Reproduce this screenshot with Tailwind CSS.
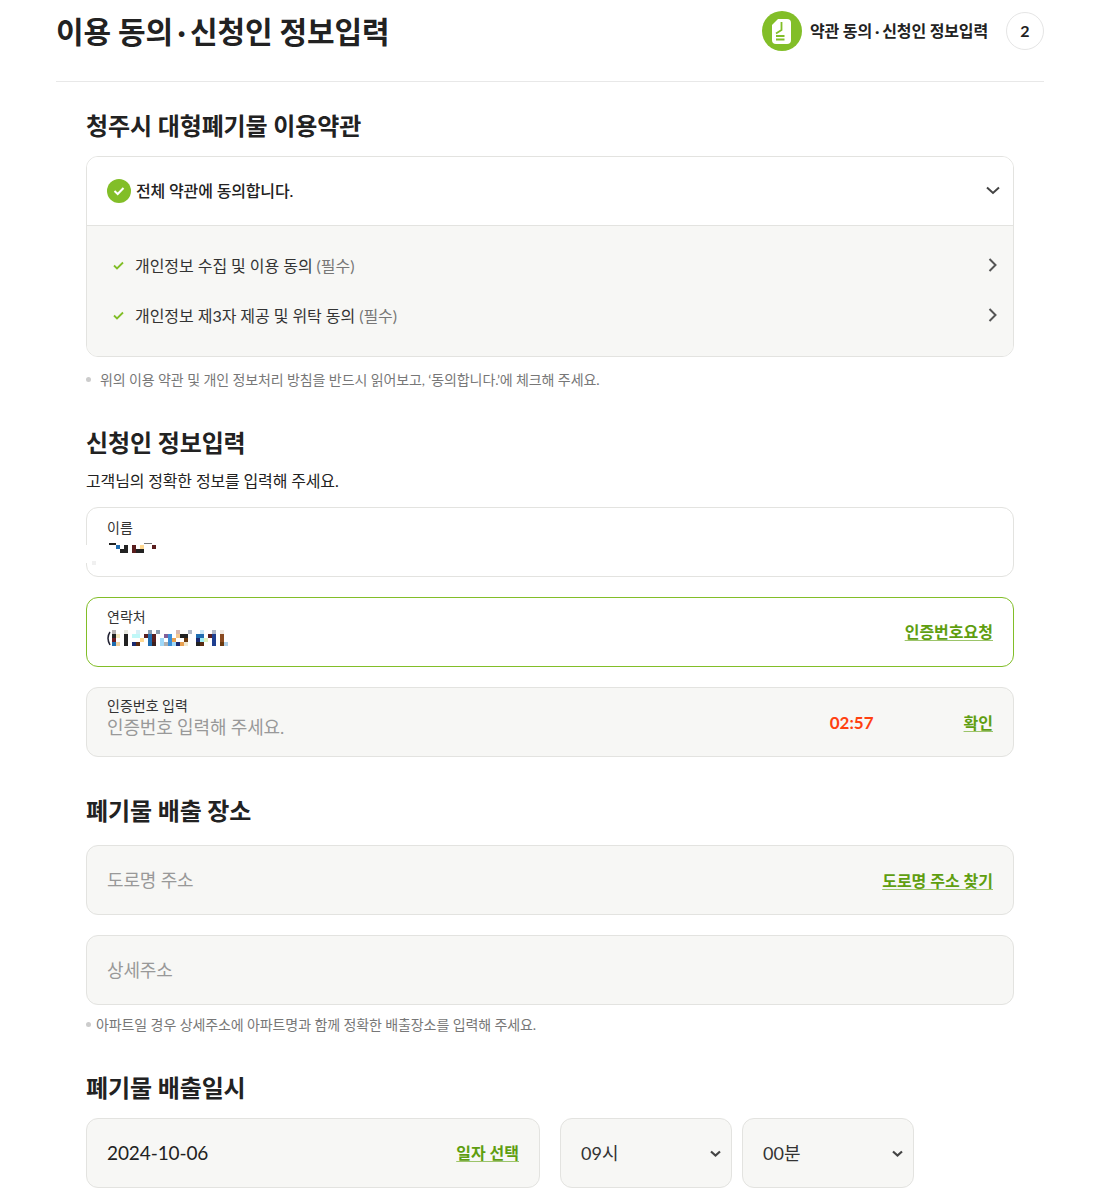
<!DOCTYPE html>
<html lang="ko">
<head>
  <meta charset="UTF-8" />
  <meta name="viewport" content="width=device-width, initial-scale=1.0"/>
  <title>이용 동의 · 신청인 정보입력</title>
  <script src="https://cdn.jsdelivr.net/npm/@tailwindcss/browser@4"></script>
</head>
<body class="bg-white text-[#222222] font-['Lato','Noto_Sans_CJK_KR',sans-serif] h-[1193px] overflow-hidden">
  <div class="w-[988px] ml-[56px]">

    <!-- 상단 타이틀 -->
    <header class="h-[82px] border-b border-[#e8e8e8] flex justify-between items-start pt-[11px]">
      <h1 class="text-[30px] leading-[40px] font-bold tracking-[-0.15px]">이용 동의<span class="mx-[4.500px]">·</span>신청인 정보입력</h1>
      <div class="flex items-center">
        <div class="w-10 h-10 rounded-full bg-[#82be28] flex items-center justify-center">
          <svg width="19" height="25" viewBox="0 0 19 25">
            <path d="M6 0H15A4 4 0 0 1 19 4V21A4 4 0 0 1 15 25H4A4 4 0 0 1 0 21V6Z" fill="#fff"/>
            <path d="M9.500 3V11L4 14.500M4 17H12.500M4 20.500H12.500" stroke="#82be28" stroke-width="1.800" fill="none"/>
          </svg>
        </div>
        <span class="ml-2 text-[16px] font-bold tracking-[-0.15px]">약관 동의<span class="mx-[3px]">·</span>신청인 정보입력</span>
        <div class="ml-[18px] w-[38px] h-[38px] rounded-full border border-[#e5e5e5] flex items-center justify-center text-[16px] font-bold">2</div>
      </div>
    </header>

    <main class="px-[30px]">

      <!-- 이용약관 -->
      <section>
        <h2 class="mt-[27px] text-[24px] leading-[34px] font-bold tracking-[-0.1px]">청주시 대형폐기물 이용약관</h2>
        <div class="mt-[13px] rounded-xl border border-[#e3e3e0] overflow-hidden">
          <div class="h-[69px] bg-white border-b border-[#e3e3e0] flex items-center justify-between pl-5 pr-[13px]">
            <div class="flex items-center">
              <span class="w-6 h-6 rounded-full bg-[#82be28] flex items-center justify-center">
                <svg width="12" height="10" viewBox="0 0 12 10"><path d="M1.500 5L4.700 8L10.500 2" stroke="#fff" stroke-width="2" fill="none"/></svg>
              </span>
              <span class="ml-[5px] text-[16px] font-medium tracking-[-0.15px]">전체 약관에 동의합니다.</span>
            </div>
            <svg class="mb-[2px]" width="14" height="9" viewBox="0 0 14 9"><path d="M1 1.500L7 7L13 1.500" stroke="#444" stroke-width="2" fill="none"/></svg>
          </div>
          <ul class="bg-[#f7f7f5] h-[130px] pt-[14px]">
            <li class="h-[50px] flex items-center justify-between pl-[26px] pr-4">
              <div class="flex items-center">
                <svg width="11" height="9" viewBox="0 0 11 9"><path d="M1 4.500L4 7.500L10 1.500" stroke="#82be28" stroke-width="1.800" fill="none"/></svg>
                <span class="ml-[11px] mt-px text-[16px] text-[#333] tracking-[-0.05px]">개인정보 수집 및 이용 동의 <span class="text-[#777]">(필수)</span></span>
              </div>
              <svg width="9" height="14" viewBox="0 0 9 14"><path d="M1.500 1L7.500 7L1.500 13" stroke="#555" stroke-width="2" fill="none"/></svg>
            </li>
            <li class="h-[50px] flex items-center justify-between pl-[26px] pr-4">
              <div class="flex items-center">
                <svg width="11" height="9" viewBox="0 0 11 9"><path d="M1 4.500L4 7.500L10 1.500" stroke="#82be28" stroke-width="1.800" fill="none"/></svg>
                <span class="ml-[11px] mt-px text-[16px] text-[#333] tracking-[-0.05px]">개인정보 제3자 제공 및 위탁 동의 <span class="text-[#777]">(필수)</span></span>
              </div>
              <svg width="9" height="14" viewBox="0 0 9 14"><path d="M1.500 1L7.500 7L1.500 13" stroke="#555" stroke-width="2" fill="none"/></svg>
            </li>
          </ul>
        </div>
        <p class="mt-[12px] h-5 flex items-center text-[14px] text-[#777] tracking-[-0.1px]">
          <span class="w-[5px] h-[5px] rounded-full bg-[#ccc] mr-[9px]"></span>위의 이용 약관 및 개인 정보처리 방침을 반드시 읽어보고, ‘동의합니다.’에 체크해 주세요.
        </p>
      </section>

      <!-- 신청인 정보 -->
      <section>
        <h2 class="mt-[37px] text-[24px] leading-[34px] font-bold tracking-[-0.1px]">신청인 정보입력</h2>
        <p class="mt-[11px] text-[16px] leading-[20px] tracking-[-0.15px]">고객님의 정확한 정보를 입력해 주세요.</p>
        <div class="mt-4 flex flex-col gap-5">
          <div class="relative h-[70px] rounded-xl border border-[#e3e3e0] bg-white pl-5 pt-[11px]">
            <div class="text-[14px] leading-[17px] text-[#333]">이름</div>
            <div class="absolute -left-px top-[37px] w-[10px] h-[18px] bg-white"></div>
            <div class="absolute left-[5px] top-[53px] w-1 h-1 bg-[#f0f0f0]"></div>
            <svg class="absolute left-[20px] top-[33px]" width="50" height="12" shape-rendering="crispEdges">
              <path fill="#222" d="M2 2h7v2H2zM13 8h8v4h-8zM17 4h4v4h-4zM29 8h8v4h-8z"/>
              <path fill="#1f6cb0" d="M9 4h4v4H9z"/>
              <path fill="#5a1e1e" d="M25 4h4v8h-4zM45 4h4v4h-4z"/>
              <path fill="#ffd890" d="M33 4h4v4h-4z"/>
              <path fill="#777" d="M37 2h8v1h-8z"/>
            </svg>
          </div>
          <div class="relative h-[70px] rounded-xl border border-[#82be28] bg-white px-5 flex justify-between items-center">
            <div class="self-start pt-[10px]">
              <div class="text-[14px] leading-[17px] text-[#333]">연락처</div>
              <svg class="mt-[5px]" width="122" height="16" shape-rendering="crispEdges">
                <path d="M3 2Q-1 8 3 15" stroke="#223" stroke-width="1.500" fill="none" shape-rendering="auto"/>
                <path fill="#b5b0b0" d="M5 0h4v4H5z"/><path fill="#e8e8e0" d="M17 0h4v4h-4z"/><path fill="#d8f0f8" d="M29 0h4v4h-4z"/><path fill="#8a9db0" d="M41 0h4v4h-4zM49 0h4v4h-4z"/><path fill="#d8b8b0" d="M69 0h4v4h-4z"/><path fill="#b0b8c8" d="M81 0h4v4h-4z"/><path fill="#c8e8f8" d="M93 0h4v4h-4z"/><path fill="#b0b8c8" d="M105 0h4v4h-4z"/><path fill="#f0e8e0" d="M113 0h4v4h-4z"/>
                <path fill="#222" d="M5 4h4v4H5zM17 4h4v12h-4zM73 4h8v4h-8zM89 12h4v4h-4z"/>
                <path fill="#f5e8c0" d="M9 4h4v4H9z"/><path fill="#c0f8f8" d="M25 4h8v4h-8z"/>
                <path fill="#5a2020" d="M37 4h4v4h-4zM45 4h4v8h-4zM101 4h4v4h-4z"/>
                <path fill="#1f6cb0" d="M41 4h4v12h-4zM89 4h8v4h-8zM5 12h4v4H5z"/>
                <path fill="#80609a" d="M57 4h4v4h-4z"/><path fill="#3a8fd8" d="M61 4h4v12h-4z"/><path fill="#f5c890" d="M69 4h4v4h-4z"/>
                <path fill="#1f3f90" d="M105 4h4v12h-4z"/><path fill="#8a4a20" d="M113 4h4v8h-4z"/>
                <path fill="#6a1a20" d="M5 8h4v4H5z"/><path fill="#ffd890" d="M33 8h4v4h-4z"/><path fill="#9fd8f8" d="M53 8h4v8h-4zM65 12h4v4h-4z"/>
                <path fill="#e8a050" d="M65 8h4v4h-4zM73 12h4v4h-4z"/><path fill="#6a3a10" d="M77 8h4v4h-4zM113 12h4v4h-4z"/>
                <path fill="#1a2a70" d="M89 8h4v4h-4zM69 12h4v4h-4zM25 12h4v4h-4z"/><path fill="#a0f0f8" d="M93 8h4v4h-4z"/><path fill="#dff0c0" d="M97 8h4v4h-4z"/>
                <path fill="#f0d0a0" d="M9 12h4v4H9z"/><path fill="#5a2a10" d="M29 12h4v4h-4zM93 12h4v4h-4z"/><path fill="#3a2020" d="M45 12h4v4h-4z"/>
                <path fill="#b0b0b0" d="M57 12h4v4h-4z"/><path fill="#f0e8d0" d="M77 12h4v4h-4z"/><path fill="#b0d0e8" d="M117 12h4v4h-4z"/>
              </svg>
            </div>
            <a class="text-[16px] leading-[20px] font-bold text-[#5f9e10] underline underline-offset-2 decoration-[#9cc46a]">인증번호요청</a>
          </div>
          <div class="h-[70px] rounded-xl border border-[#e3e3e0] bg-[#f7f7f5] pl-5 pr-5 pt-[9px] flex justify-between">
            <div>
              <div class="text-[14px] leading-[17px] text-[#333]">인증번호 입력</div>
              <div class="mt-px text-[18px] leading-[24px] text-[#999] tracking-[-0.15px]">인증번호 입력해 주세요.</div>
            </div>
            <div class="flex items-start pt-[16px]">
              <span class="text-[17px] leading-5 font-bold text-[#ff4010]">02:57</span>
              <a class="ml-[90px] text-[16px] leading-[20px] font-bold text-[#5f9e10] underline underline-offset-2 decoration-[#9cc46a]">확인</a>
            </div>
          </div>
        </div>
      </section>

      <!-- 배출 장소 -->
      <section>
        <h2 class="mt-[37px] text-[24px] leading-[34px] font-bold tracking-[-0.1px]">폐기물 배출 장소</h2>
        <div class="mt-[17px] flex flex-col gap-5">
          <div class="h-[70px] rounded-xl border border-[#e3e3e0] bg-[#f7f7f5] px-5 flex items-center justify-between">
            <span class="text-[18px] text-[#999] tracking-[-0.15px]">도로명 주소</span>
            <a class="mt-px text-[16px] leading-[20px] font-bold text-[#5f9e10] underline underline-offset-2 decoration-[#9cc46a]">도로명 주소 찾기</a>
          </div>
          <div class="h-[70px] rounded-xl border border-[#e3e3e0] bg-[#f7f7f5] px-5 flex items-center">
            <span class="text-[18px] text-[#999] tracking-[-0.15px]">상세주소</span>
          </div>
        </div>
        <p class="mt-[9px] h-5 flex items-center text-[14px] text-[#777] tracking-[-0.1px]">
          <span class="w-[5px] h-[5px] rounded-full bg-[#ccc] mr-[5px]"></span>아파트일 경우 상세주소에 아파트명과 함께 정확한 배출장소를 입력해 주세요.
        </p>
      </section>

      <!-- 배출 일시 -->
      <section>
        <h2 class="mt-[37px] text-[24px] leading-[34px] font-bold tracking-[-0.1px]">폐기물 배출일시</h2>
        <div class="mt-[13px] flex">
          <div class="w-[454px] h-[70px] rounded-xl border border-[#e3e3e0] bg-[#f7f7f5] px-5 flex items-center justify-between">
            <span class="text-[19px] text-[#222] tracking-[-0.1px]">2024-10-06</span>
            <a class="text-[16px] leading-[20px] font-bold text-[#5f9e10] underline underline-offset-2 decoration-[#9cc46a]">일자 선택</a>
          </div>
          <div class="ml-5 w-[172px] h-[70px] rounded-xl border border-[#e3e3e0] bg-[#f7f7f5] pl-5 pr-[10px] flex items-center justify-between">
            <span class="text-[18px] text-[#333]">09시</span>
            <svg width="11" height="7" viewBox="0 0 11 7"><path d="M1 1.500L5.500 5.500L10 1.500" stroke="#444" stroke-width="2.200" fill="none"/></svg>
          </div>
          <div class="ml-[10px] w-[172px] h-[70px] rounded-xl border border-[#e3e3e0] bg-[#f7f7f5] pl-5 pr-[10px] flex items-center justify-between">
            <span class="text-[18px] text-[#333]">00분</span>
            <svg width="11" height="7" viewBox="0 0 11 7"><path d="M1 1.500L5.500 5.500L10 1.500" stroke="#444" stroke-width="2.200" fill="none"/></svg>
          </div>
        </div>
      </section>
    </main>
  </div>
</body>
</html>
